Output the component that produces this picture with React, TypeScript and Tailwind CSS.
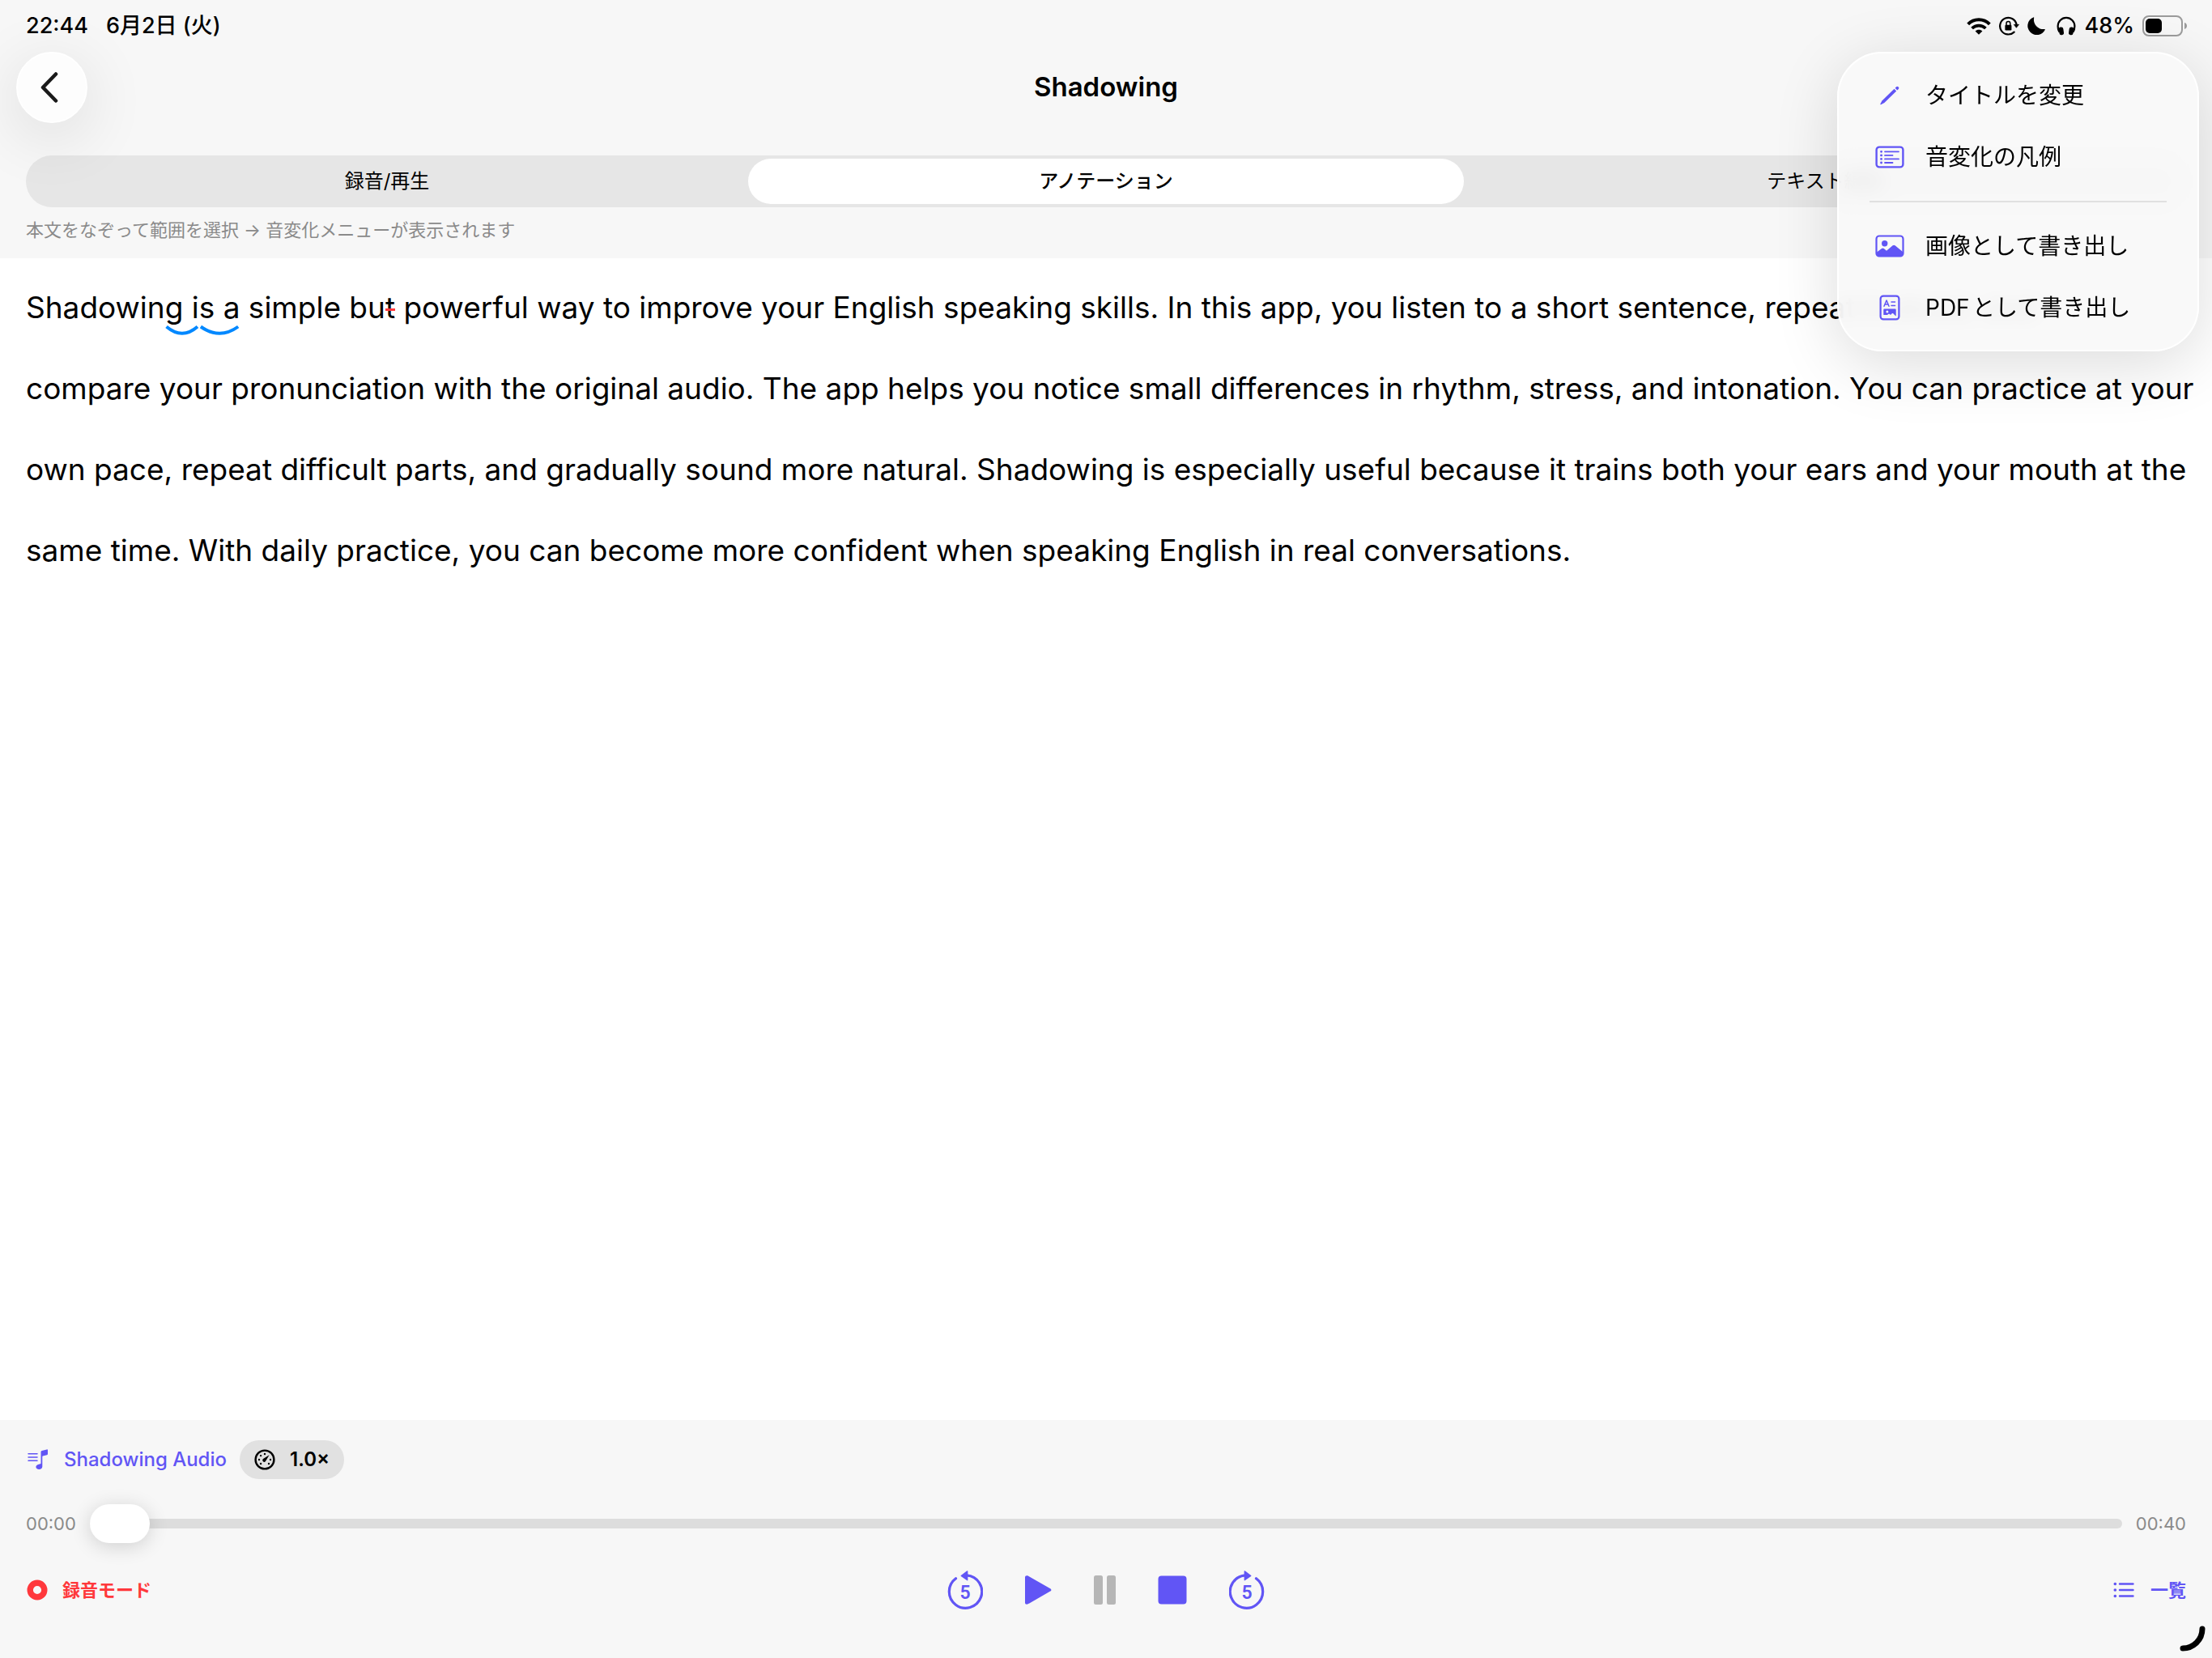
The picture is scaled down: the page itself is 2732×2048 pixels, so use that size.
import React, { useState } from "react";

const accent = "text-[#6155f5]";

function WifiIcon() {
  return (
    <svg viewBox="0 0 30 21" className="h-[21px] w-[30px]" fill="none" stroke="currentColor" aria-hidden="true">
      <path d="M1.7 7.8C9 .4 21 .4 28.3 7.8" strokeWidth="4" />
      <path d="M6.6 13c4.7-4.6 12.1-4.6 16.8 0" strokeWidth="3.8" />
      <path d="M15 20.8l-4.4-4.3c2.4-2.2 6.4-2.2 8.8 0z" fill="currentColor" stroke="none" />
    </svg>
  );
}

function RotationLockIcon() {
  return (
    <svg viewBox="0 0 25 24" className="h-6 w-[25px]" fill="none" stroke="currentColor" aria-hidden="true">
      <path d="M18.6 19.6A10.3 10.3 0 1 1 21.6 10.5" strokeWidth="2.2" strokeLinecap="round" />
      <path d="M18.2 10.3h6.4l-3.2 4z" fill="currentColor" strokeWidth=".6" strokeLinejoin="round" />
      <rect x="7.4" y="10.8" width="8" height="6.6" rx="1.2" fill="currentColor" stroke="none" />
      <path d="M9 11.3V9a2.4 2.4 0 0 1 4.8 0v2.3" strokeWidth="1.5" />
    </svg>
  );
}

function MoonIcon() {
  return (
    <svg viewBox="0 0 22 22" className="size-[22px]" fill="currentColor" aria-hidden="true">
      <path d="M7.4.4c.5-.2 1 .2.8.7A11.6 11.6 0 0 0 21 15c.6-.2 1 .3.8.8A11.3 11.3 0 1 1 7.4.4z" />
    </svg>
  );
}

function HeadphonesIcon() {
  return (
    <svg viewBox="0 0 24 24" className="size-6" fill="none" stroke="currentColor" aria-hidden="true">
      <path d="M3.6 19.5C1.8 17 1.6 14.6 1.6 12.3a10.4 10.4 0 0 1 20.8 0c0 2.3-.2 4.7-2 7.2" strokeWidth="2.2" />
      <rect x="3.1" y="13.5" width="5.6" height="9.8" rx="2.6" fill="currentColor" stroke="none" transform="rotate(-8 5.8 18.5)" />
      <rect x="15.3" y="13.5" width="5.6" height="9.8" rx="2.6" fill="currentColor" stroke="none" transform="rotate(8 18.2 18.5)" />
    </svg>
  );
}

function BatteryIcon() {
  return (
    <svg viewBox="0 0 56 26" className="h-[26px] w-[56px]" aria-hidden="true">
      <rect x="1" y="1" width="48" height="24" rx="7" fill="none" stroke="#9b9b9b" strokeWidth="2" />
      <rect x="4" y="4" width="20" height="18" rx="5" fill="#000" />
      <path d="M52 9c2 .6 3 2.2 3 4s-1 3.4-3 4z" fill="#9b9b9b" />
    </svg>
  );
}

function PencilIcon() {
  return (
    <svg viewBox="0 0 24 24" className="size-6" fill="currentColor" aria-hidden="true">
      <path d="M17.5 3.8l2.7 2.7L5.3 21.1 1 23.2c-.5.2-.9-.2-.7-.7L2.4 18.4z" />
      <path d="M18.6 2.7l1.5-1.5c.7-.7 1.6-.7 2.3 0l.4.4c.7.7.7 1.6 0 2.3l-1.5 1.5z" />
    </svg>
  );
}

function ListRectangleIcon() {
  return (
    <svg viewBox="0 0 36 28" className="h-7 w-9" fill="none" stroke="currentColor" strokeWidth="1.8" strokeLinecap="round" aria-hidden="true">
      <rect x="1.6" y="1.6" width="32.8" height="24.8" rx="3.5" strokeWidth="2.4" />
      <path d="M12 7.3h17M12 11.9h9.500M12 16.4h17M12 21h9.500" />
      <path d="M7.5 7.3h.1M7.5 11.9h.1M7.5 16.4h.1M7.5 21h.1" strokeWidth="2.8" />
    </svg>
  );
}

function PhotoIcon() {
  return (
    <svg viewBox="0 0 36 28" className="h-7 w-9" aria-hidden="true">
      <path d="M2 21.5l6-4.400c1-.7 1.900-.7 2.800 0l3.200 2.600 7.600-6.400c1-.8 2-.8 3 0L34 21v3c0 1.500-1 2.500-2.500 2.500h-27C3 26.500 2 25.500 2 24z" fill="currentColor" />
      <circle cx="11.700" cy="10.700" r="3.700" fill="currentColor" />
      <rect x="1.500" y="1.500" width="33" height="25" rx="3.500" fill="none" stroke="currentColor" strokeWidth="2.200" />
    </svg>
  );
}

function DocumentIcon() {
  return (
    <svg viewBox="0 0 26 32" className="h-8 w-[26px]" fill="none" stroke="currentColor" aria-hidden="true">
      <rect x="1.600" y="1.600" width="22.800" height="28.800" rx="3.500" strokeWidth="2.200" />
      <path d="M6 14.300L9 7l3 7.300M7 12h4" strokeWidth="1.500" strokeLinecap="round" strokeLinejoin="round" />
      <path d="M15 9h4.500M15 13.500h4.500" strokeWidth="1.500" strokeLinecap="round" />
      <path d="M6.500 17.500h13c.7 0 1.200.5 1.200 1.200v7.800l-1.500-1.300-1.700-1.700c-.6-.6-1.400-.6-2 0l-1.500 1.600-1.200-1c-.5-.5-1.100-.5-1.600 0l-1.200 1H5.300v-6.400c0-.7.500-1.200 1.200-1.200z" fill="currentColor" stroke="none" />
      <circle cx="9.900" cy="21" r="1.500" fill="#f9f9f9" stroke="none" />
    </svg>
  );
}

function MusicListIcon() {
  return (
    <svg viewBox="0 0 26 26" className="size-[26px]" fill="none" stroke="currentColor" aria-hidden="true">
      <path d="M1 5.700h11M1 10h11M1 14.300h11" strokeWidth="1.500" strokeLinecap="round" />
      <path d="M16.500 3.300c0-.7.400-1.200 1.100-1.400l6.200-1.500c.7-.2 1.200.2 1.200.9v4.600c0 .7-.4 1.100-1 1.300l-5.100 1.300c-.4.100-.6.300-.6.700v12.200c0 2-1.700 3.500-4.100 3.500-2.200 0-3.800-1.100-3.800-2.900 0-1.600 1-2.600 2.800-3.100l2.300-.6c.7-.2 1-.4 1-1.100z" fill="currentColor" stroke="none" />
    </svg>
  );
}

function GaugeIcon() {
  const dots = [
    [13, 6], [8.1, 8.1], [6, 13], [8.1, 18], [18, 18], [20, 13],
  ];
  return (
    <svg viewBox="0 0 26 26" className="size-[26px]" fill="none" stroke="currentColor" aria-hidden="true">
      <circle cx="13" cy="13" r="11.400" strokeWidth="2.400" />
      {dots.map(([x, y]) => (
        <circle key={`${x}-${y}`} cx={x} cy={y} r="1.200" fill="currentColor" stroke="none" />
      ))}
      <path d="M18.600 7.300L11 12.100a2.100 2.100 0 1 0 3 2.900z" fill="currentColor" stroke="none" />
    </svg>
  );
}

function Skip5Icon({ forward = false }: { forward?: boolean }) {
  return (
    <svg viewBox="0 0 44 48" className="h-12 w-11" fill="none" stroke="currentColor" aria-hidden="true">
      <g transform={forward ? "translate(44 0) scale(-1 1)" : undefined}>
        <path d="M10.500 9.800A20.200 20.200 0 1 0 24 5.900" strokeWidth="3.200" strokeLinecap="round" />
        <path d="M25.400.9v10.800c0 .6-.5.900-1 .6L16.800 7c-.4-.3-.4-.8 0-1.100L24.400.3c.5-.3 1 0 1 .6z" fill="currentColor" stroke="none" />
      </g>
      <text x="22" y="34.500" textAnchor="middle" fontSize="23" fontWeight="600" fill="currentColor" stroke="none" fontFamily="Roboto, sans-serif">
        5
      </text>
    </svg>
  );
}

function PlayIcon() {
  return (
    <svg viewBox="0 0 33 36" className="h-9 w-[33px]" fill="currentColor" aria-hidden="true">
      <path d="M0 2.500C0 .5 1.700-.4 3.700.6l27.500 15.600c1.600.9 1.600 2.500 0 3.400L3.700 35.300C1.700 36.400 0 35.500 0 33.500z" />
    </svg>
  );
}

function PauseIcon() {
  return (
    <svg viewBox="0 0 27 36" className="h-9 w-[27px]" fill="currentColor" aria-hidden="true">
      <rect width="11" height="36" rx="2.500" />
      <rect x="16" width="11" height="36" rx="2.500" />
    </svg>
  );
}

function StopIcon() {
  return (
    <svg viewBox="0 0 36 36" className="size-9" fill="currentColor" aria-hidden="true">
      <rect width="35" height="35" x=".5" y=".5" rx="4" />
    </svg>
  );
}

function BulletListIcon() {
  return (
    <svg viewBox="0 0 26 20" className="h-5 w-[26px]" fill="none" stroke="currentColor" strokeLinecap="round" aria-hidden="true">
      <path d="M8 2.500h16.500M8 10h16.500M8 17.500h16.500" strokeWidth="2.400" />
      <path d="M2.300 2.500h.1M2.300 10h.1M2.300 17.500h.1" strokeWidth="3.600" />
    </svg>
  );
}

function Linked({ children }: { children: React.ReactNode }) {
  return (
    <span className="relative">
      {children}
      <svg viewBox="0 0 40 12" preserveAspectRatio="none" className="absolute -bottom-3 left-0 h-3 w-full overflow-visible text-[#0088ff]" fill="none" stroke="currentColor" aria-hidden="true">
        <path d="M1.500 1.500Q20 18 38 1.500" strokeWidth="4" vectorEffect="non-scaling-stroke" />
      </svg>
    </span>
  );
}

function Dropped({ children }: { children: React.ReactNode }) {
  return (
    <span className="relative">
      {children}
      <span className="absolute inset-x-0 top-6 h-[3px] bg-[#ff383c]" />
    </span>
  );
}

function MenuItem({ icon, label }: { icon: React.ReactNode; label: string }) {
  return (
    <button type="button" role="menuitem" className="flex h-[76px] w-full items-center gap-6 pr-8 pl-[43px] text-left text-[28px] [text-autospace:normal]">
      <span className={`flex w-10 justify-center ${accent}`}>{icon}</span>
      {label}
    </button>
  );
}

const tabs = ["録音/再生", "アノテーション", "テキスト編集"];

export default function App() {
  const [tab, setTab] = useState(1);
  const [position, setPosition] = useState(0);

  return (
    <div lang="ja" className="relative flex min-h-screen flex-col overflow-hidden bg-white font-['Inter','Noto_Sans_CJK_JP',sans-serif] text-black">
      <header className="bg-[#f7f7f7] px-8 pb-[19px]">
        <div className="flex h-16 items-center justify-between text-[27px] font-medium">
          <div className="flex gap-[22px]">
            <span>22:44</span>
            <span>6月2日 (火)</span>
          </div>
          <div className="-mr-[2px] flex items-center gap-[10px]">
            <WifiIcon />
            <RotationLockIcon />
            <MoonIcon />
            <span className="ml-1"><HeadphonesIcon /></span>
            <span>48%</span>
            <BatteryIcon />
          </div>
        </div>

        <div className="relative -mx-3 flex h-[88px] items-center justify-center">
          <button type="button" aria-label="戻る" className="absolute left-0 flex size-[88px] items-center justify-center rounded-full border-2 border-white bg-[#fdfdfd] shadow-[0_16px_80px_rgba(0,0,0,0.12)]">
            <svg viewBox="0 0 22 38" className="mr-[6px] h-[38px] w-[22px]" fill="none" stroke="#1a1a1a" strokeWidth="4.500" strokeLinecap="round" strokeLinejoin="round" aria-hidden="true">
              <path d="M19 2.500L3 19l16 16.500" />
            </svg>
          </button>
          <h1 className="text-[33px] font-semibold">Shadowing</h1>
        </div>

        <div role="tablist" className="mt-10 grid h-16 grid-cols-3 gap-1 rounded-full bg-[#e6e6e6] p-1 text-2xl">
          {tabs.map((label, i) => (
            <button
              key={label}
              type="button"
              role="tab"
              aria-selected={i === tab}
              onClick={() => setTab(i)}
              className={i === tab ? "rounded-full bg-white font-medium" : "rounded-full font-normal"}
            >
              {label}
            </button>
          ))}
        </div>
        <p className="mt-3 text-[22px] leading-8 text-[#8a8a8a]">本文をなぞって範囲を選択 → 音変化メニューが表示されます</p>
      </header>

      <main className="flex-1 pt-[11px] pr-4 pl-8">
        <p className="text-[37px] leading-[100px]">
          Shadowin<Linked>g i</Linked><Linked>s a</Linked> simple bu<Dropped>t</Dropped> powerful way to improve your English speaking skills. In this app, you listen to a short sentence, repeat it aloud, and
          <br />
          compare your pronunciation with the original audio. The app helps you notice small differences in rhythm, stress, and intonation. You can practice at your own pace, repeat difficult parts, and gradually sound more natural. Shadowing is especially useful because it trains both your ears and your mouth at the same time. With daily practice, you can become more confident when speaking English in real conversations.
        </p>
      </main>

      <footer className="bg-[#f7f7f7] px-8 pt-[25px] pb-[60px]">
        <div className="flex items-center gap-4">
          <button type="button" className={`flex items-center gap-[19px] text-2xl font-medium ${accent}`}>
            <span className="ml-[2px]"><MusicListIcon /></span>
            Shadowing Audio
          </button>
          <button type="button" className="flex h-12 items-center gap-[18px] rounded-full bg-[#e1e1e1] px-[18px] text-2xl font-semibold">
            <GaugeIcon />
            1.0×
          </button>
        </div>

        <div className="mt-[31px] flex h-12 items-center gap-[17px] text-[22px] text-[#8a8a8a]">
          <span>00:00</span>
          <input
            type="range"
            min={0}
            max={40}
            value={position}
            onChange={(e) => setPosition(Number(e.target.value))}
            aria-label="再生位置"
            className="h-12 min-w-0 flex-1 appearance-none bg-transparent [&::-webkit-slider-runnable-track]:h-3 [&::-webkit-slider-runnable-track]:rounded-full [&::-webkit-slider-runnable-track]:bg-[#dddddd] [&::-webkit-slider-thumb]:-mt-[18px] [&::-webkit-slider-thumb]:h-12 [&::-webkit-slider-thumb]:w-[74px] [&::-webkit-slider-thumb]:appearance-none [&::-webkit-slider-thumb]:rounded-full [&::-webkit-slider-thumb]:bg-white [&::-webkit-slider-thumb]:shadow-[0_4px_24px_rgba(0,0,0,0.16)]"
          />
          <span>00:40</span>
        </div>

        <div className={`mt-[34px] grid h-12 grid-cols-[1fr_auto_1fr] items-center text-[22px] font-bold ${accent}`}>
          <button type="button" className="flex items-center gap-[18px] justify-self-start text-[#ff383c]">
            <svg viewBox="0 0 26 26" className="ml-[1px] size-[26px]" fill="none" stroke="currentColor" aria-hidden="true">
              <circle cx="13" cy="13" r="8.800" strokeWidth="7.400" />
            </svg>
            録音モード
          </button>
          <div className="flex items-center gap-[52px]">
            <button type="button" aria-label="5秒戻る"><Skip5Icon /></button>
            <button type="button" aria-label="再生"><PlayIcon /></button>
            <button type="button" aria-label="一時停止" disabled className="text-[#b6b6b6]"><PauseIcon /></button>
            <button type="button" aria-label="停止"><StopIcon /></button>
            <button type="button" aria-label="5秒進む"><Skip5Icon forward /></button>
          </div>
          <button type="button" className="flex items-center gap-5 justify-self-end">
            <BulletListIcon />
            一覧
          </button>
        </div>
      </footer>

      <div role="menu" className="absolute top-16 right-4 w-[447px] rounded-[56px] border-2 border-white bg-[#f9f9f9]/92 py-[14px] shadow-[0_16px_80px_rgba(0,0,0,0.14)] backdrop-blur-md">
        <MenuItem icon={<PencilIcon />} label="タイトルを変更" />
        <MenuItem icon={<ListRectangleIcon />} label="音変化の凡例" />
        <div role="separator" className="mx-[38px] my-4 h-[2px] bg-[#e0e0e0]" />
        <MenuItem icon={<PhotoIcon />} label="画像として書き出し" />
        <MenuItem icon={<DocumentIcon />} label="PDFとして書き出し" />
      </div>

      <svg viewBox="0 0 32 32" className="absolute right-2 bottom-2 size-8" fill="none" stroke="#000" strokeWidth="7" strokeLinecap="round" aria-hidden="true">
        <path d="M28 4A24 24 0 0 1 4 28" />
      </svg>
    </div>
  );
}
